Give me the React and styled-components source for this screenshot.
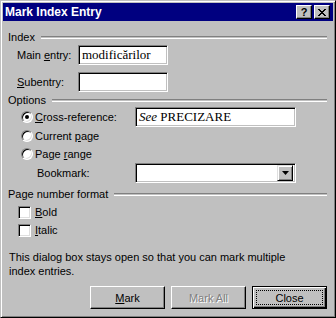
import { createGlobalStyle } from "styled-components";
import styled from "styled-components";

const GlobalStyle = createGlobalStyle`
  html, body {
    margin: 0;
    padding: 0;
    background: #c0c0c0;
  }
  body {
    font-family: "Liberation Sans", Arial, sans-serif;
    font-size: 11px;
    color: #000;
  }
`;

const Window = styled.div`
  width: 336px;
  height: 318px;
  box-sizing: border-box;
  background: #c0c0c0;
  border: 1px solid;
  border-color: #c0c0c0 #000 #000 #c0c0c0;
  box-shadow: inset 1px 1px #fff, inset -1px -1px #808080;
  padding: 2px;
  display: flex;
  flex-direction: column;
`;

const TitleBar = styled.div`
  height: 18px;
  background: #000080;
  display: flex;
  align-items: center;
  padding: 0 3px 0 2px;
`;

const Title = styled.div`
  flex: 1;
  color: #fff;
  font-weight: bold;
  font-size: 12px;
  line-height: 18px;
`;

const TitleButtons = styled.div`
  display: flex;
  gap: 2px;
`;

const TitleButton = styled.div`
  width: 16px;
  height: 14px;
  box-sizing: border-box;
  background: #c0c0c0;
  border: 1px solid;
  border-color: #fff #000 #000 #fff;
  box-shadow: inset -1px -1px #808080;
  display: flex;
  align-items: center;
  justify-content: center;
  font-weight: bold;
  font-size: 11px;
  line-height: 1;
`;

const Body = styled.div`
  padding: 9px 6px 0 5px;
  display: flex;
  flex-direction: column;
`;

const GroupHeader = styled.div`
  height: 14px;
  display: flex;
  align-items: center;
  margin-top: ${(p) => p.$mt || 0}px;
`;

const GroupLine = styled.div`
  flex: 1;
  height: 1px;
  border-top: 1px solid #808080;
  border-bottom: 1px solid #fff;
  margin-left: 6px;
`;

const Row = styled.div`
  height: ${(p) => p.$h || 18}px;
  display: flex;
  align-items: center;
  padding-left: ${(p) => p.$indent || 0}px;
  margin-top: ${(p) => p.$mt || 0}px;
`;

const Label = styled.span`
  width: ${(p) => (p.$w ? `${p.$w}px` : "auto")};
  flex-shrink: 0;
  white-space: nowrap;
`;

const Key = styled.u`
  text-decoration: underline;
  text-underline-offset: 1px;
`;

const Field = styled.div`
  width: ${(p) => p.$w}px;
  height: 20px;
  box-sizing: border-box;
  background: #fff;
  border: 1px solid;
  border-color: #808080 #fff #fff #808080;
  box-shadow: inset 1px 1px #000, inset -1px -1px #c0c0c0;
  display: flex;
  align-items: center;
  padding-left: 3px;
  font-family: "Liberation Serif", "Times New Roman", serif;
  font-size: 13px;
  white-space: nowrap;
  overflow: hidden;
`;

const Combo = styled(Field)`
  justify-content: space-between;
  padding: 2px;
`;

const ComboButton = styled.div`
  width: 16px;
  height: 16px;
  box-sizing: border-box;
  background: #c0c0c0;
  border: 1px solid;
  border-color: #dfdfdf #000 #000 #dfdfdf;
  box-shadow: inset 1px 1px #fff, inset -1px -1px #808080;
  display: flex;
  align-items: center;
  justify-content: center;
`;

const Radio = styled.span`
  width: 12px;
  height: 12px;
  box-sizing: border-box;
  border-radius: 50%;
  border: 1px solid;
  border-color: #808080 #fff #fff #808080;
  box-shadow: inset 1px 1px #000, inset -1px -1px #dfdfdf;
  background: #fff;
  display: flex;
  align-items: center;
  justify-content: center;
  margin-right: 2px;
  flex-shrink: 0;

  &::after {
    content: "";
    width: 4px;
    height: 4px;
    border-radius: 50%;
    background: ${(p) => (p.$checked ? "#000" : "transparent")};
  }
`;

const Checkbox = styled.span`
  width: 13px;
  height: 13px;
  box-sizing: border-box;
  border: 1px solid;
  border-color: #808080 #fff #fff #808080;
  box-shadow: inset 1px 1px #000, inset -1px -1px #dfdfdf;
  background: #fff;
  margin-right: 4px;
  flex-shrink: 0;
`;

const Note = styled.p`
  margin: 11px 0 0 1px;
  line-height: 14px;
  width: 290px;
`;

const ButtonRow = styled.div`
  display: flex;
  justify-content: flex-end;
  gap: 6px;
  margin-top: 8px;
`;

const Button = styled.div`
  width: 75px;
  height: 23px;
  box-sizing: border-box;
  background: #c0c0c0;
  border: 1px solid;
  border-color: ${(p) => (p.$default ? "#000" : "#fff #000 #000 #fff")};
  box-shadow: ${(p) =>
    p.$default
      ? "inset 1px 1px #fff, inset -1px -1px #000, inset -2px -2px #808080"
      : "inset -1px -1px #808080"};
  display: flex;
  align-items: center;
  justify-content: center;
  color: ${(p) => (p.$disabled ? "#808080" : "#000")};
  text-shadow: ${(p) => (p.$disabled ? "1px 1px #fff" : "none")};
  padding: 3px;
`;

const FocusRing = styled.div`
  flex: 1;
  align-self: stretch;
  border: 1px dotted #000;
  display: flex;
  align-items: center;
  justify-content: center;
`;

export default function App() {
  return (
    <>
      <GlobalStyle />
      <Window>
        <TitleBar>
          <Title>Mark Index Entry</Title>
          <TitleButtons>
            <TitleButton>?</TitleButton>
            <TitleButton>
              <svg width="8" height="7" viewBox="0 0 8 7">
                <path
                  d="M0 0h2v1h1v1h2v-1h1v-1h2v1h-1v1h-1v1h-1v1h1v1h1v1h1v1h-2v-1h-1v-1h-2v1h-1v1h-2v-1h1v-1h1v-1h1v-1h-1v-1h-1v-1h-1z"
                  fill="#000"
                />
              </svg>
            </TitleButton>
          </TitleButtons>
        </TitleBar>
        <Body>
          <GroupHeader>
            Index
            <GroupLine />
          </GroupHeader>
          <Row $h={20} $indent={9} $mt={1}>
            <Label $w={61}>
              Main <Key>e</Key>ntry:
            </Label>
            <Field $w={90}>modificărilor</Field>
          </Row>
          <Row $h={20} $indent={9} $mt={7}>
            <Label $w={61}>
              <Key>S</Key>ubentry:
            </Label>
            <Field $w={90} />
          </Row>
          <GroupHeader $mt={1}>
            Options
            <GroupLine />
          </GroupHeader>
          <Row $h={20} $indent={13}>
            <Radio $checked />
            <Label $w={100}>
              <Key>C</Key>ross-reference:
            </Label>
            <Field $w={161}>
              <i>See</i>&nbsp;PRECIZARE
            </Field>
          </Row>
          <Row $indent={13}>
            <Radio />
            <Label>
              Current <Key>p</Key>age
            </Label>
          </Row>
          <Row $indent={13}>
            <Radio />
            <Label>
              Page <Key>r</Key>ange
            </Label>
          </Row>
          <Row $h={20} $indent={29}>
            <Label $w={98}>Bookmark:</Label>
            <Combo $w={161}>
              <span />
              <ComboButton>
                <svg width="7" height="4" viewBox="0 0 7 4">
                  <path d="M0 0h7l-3.5 4z" fill="#000" />
                </svg>
              </ComboButton>
            </Combo>
          </Row>
          <GroupHeader $mt={4}>
            Page number format
            <GroupLine />
          </GroupHeader>
          <Row $indent={10} $mt={2}>
            <Checkbox />
            <Label>
              <Key>B</Key>old
            </Label>
          </Row>
          <Row $indent={10}>
            <Checkbox />
            <Label>
              <Key>I</Key>talic
            </Label>
          </Row>
          <Note>
            This dialog box stays open so that you can mark multiple index
            entries.
          </Note>
          <ButtonRow>
            <Button>
              <Key>M</Key>ark
            </Button>
            <Button $disabled>Mark All</Button>
            <Button $default>
              <FocusRing>Close</FocusRing>
            </Button>
          </ButtonRow>
        </Body>
      </Window>
    </>
  );
}
